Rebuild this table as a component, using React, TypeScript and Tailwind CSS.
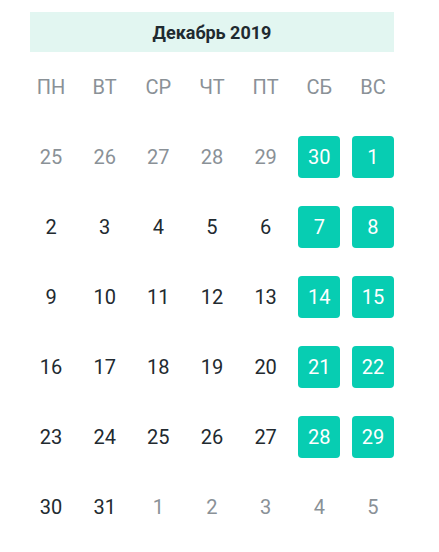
import React from "react";

type Day = { n: number; muted?: boolean; hl?: boolean };

const rows: Day[][] = [
  [{ n: 25, muted: true }, { n: 26, muted: true }, { n: 27, muted: true }, { n: 28, muted: true }, { n: 29, muted: true }, { n: 30, hl: true }, { n: 1, hl: true }],
  [{ n: 2 }, { n: 3 }, { n: 4 }, { n: 5 }, { n: 6 }, { n: 7, hl: true }, { n: 8, hl: true }],
  [{ n: 9 }, { n: 10 }, { n: 11 }, { n: 12 }, { n: 13 }, { n: 14, hl: true }, { n: 15, hl: true }],
  [{ n: 16 }, { n: 17 }, { n: 18 }, { n: 19 }, { n: 20 }, { n: 21, hl: true }, { n: 22, hl: true }],
  [{ n: 23 }, { n: 24 }, { n: 25 }, { n: 26 }, { n: 27 }, { n: 28, hl: true }, { n: 29, hl: true }],
  [{ n: 30 }, { n: 31 }, { n: 1, muted: true }, { n: 2, muted: true }, { n: 3, muted: true }, { n: 4, muted: true }, { n: 5, muted: true }],
];

const heads = ["ПН", "ВТ", "СР", "ЧТ", "ПТ", "СБ", "ВС"];

export default function App() {
  return (
    <div className="w-[439px] h-[552px] bg-white pt-[12px] pl-[30px]" style={{ fontFamily: "Roboto, sans-serif" }}>
      <div className="w-[364px]">
        <div className="h-[40px] bg-[#e2f6f1] flex items-center justify-center text-[18px] font-bold text-[#1f2a30]">
          Декабрь 2019
        </div>
        <div className="grid grid-cols-[repeat(7,42px)] gap-x-[11.67px] gap-y-[28px] mt-[14px]">
          {heads.map((h) => (
            <div key={h} className="h-[42px] flex items-center justify-center text-[20px] text-[#8a9197]">
              {h}
            </div>
          ))}
          {rows.flat().map((d, i) => (
            <div
              key={i}
              className={
                d.hl
                  ? "h-[42px] rounded-[4px] bg-[#07cdb2] text-white flex items-center justify-center text-[20px]"
                  : d.muted
                  ? "h-[42px] flex items-center justify-center text-[20px] text-[#8a9197]"
                  : "h-[42px] flex items-center justify-center text-[20px] text-[#222a30]"
              }
            >
              {d.n}
            </div>
          ))}
        </div>
      </div>
    </div>
  );
}
